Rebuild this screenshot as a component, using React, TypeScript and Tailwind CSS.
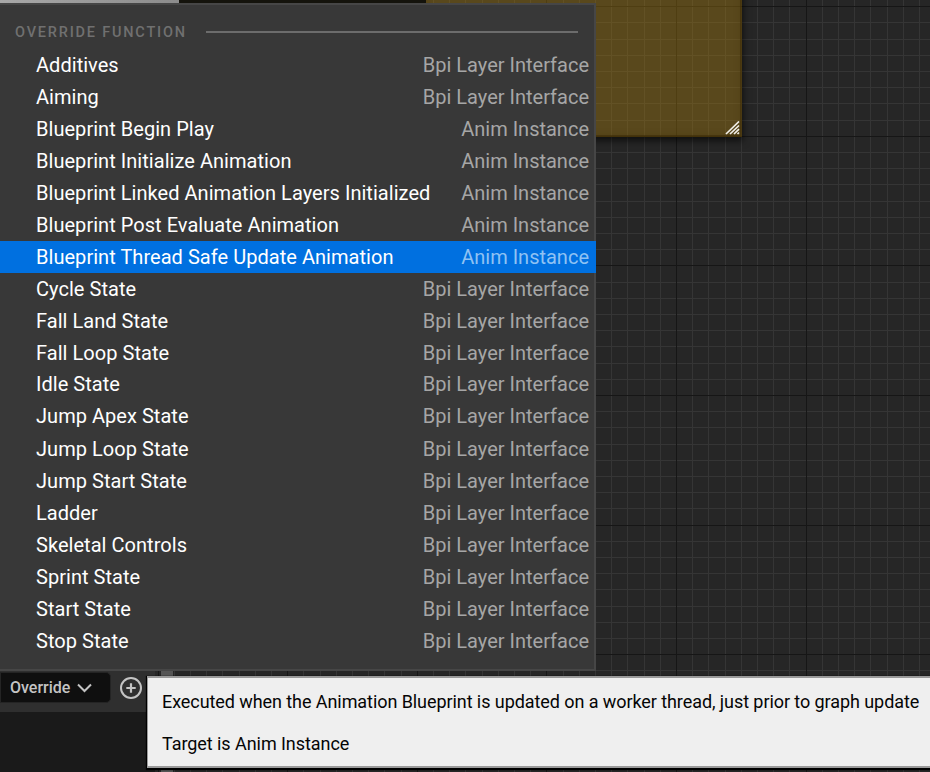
const items: [string, string][] = [
  ["Additives", "Bpi Layer Interface"],
  ["Aiming", "Bpi Layer Interface"],
  ["Blueprint Begin Play", "Anim Instance"],
  ["Blueprint Initialize Animation", "Anim Instance"],
  ["Blueprint Linked Animation Layers Initialized", "Anim Instance"],
  ["Blueprint Post Evaluate Animation", "Anim Instance"],
  ["Blueprint Thread Safe Update Animation", "Anim Instance"],
  ["Cycle State", "Bpi Layer Interface"],
  ["Fall Land State", "Bpi Layer Interface"],
  ["Fall Loop State", "Bpi Layer Interface"],
  ["Idle State", "Bpi Layer Interface"],
  ["Jump Apex State", "Bpi Layer Interface"],
  ["Jump Loop State", "Bpi Layer Interface"],
  ["Jump Start State", "Bpi Layer Interface"],
  ["Ladder", "Bpi Layer Interface"],
  ["Skeletal Controls", "Bpi Layer Interface"],
  ["Sprint State", "Bpi Layer Interface"],
  ["Start State", "Bpi Layer Interface"],
  ["Stop State", "Bpi Layer Interface"],
];

const SPACING = 16.2;

function gridLines(origin: number, from: number, to: number) {
  const lines: { at: number; major: boolean }[] = [];
  for (let k = from; k <= to; k++) {
    lines.push({ at: Math.floor(origin + k * SPACING), major: k % 8 === 0 });
  }
  return lines;
}

const columns = gridLines(806.1, -40, 7);
const rows = gridLines(265.8, -16, 31);

/** Graph canvas with its grid; the comment box sits on top of it. */
function GraphCanvas() {
  return (
    <div className="absolute inset-0 bg-[#262626]">
      <svg width="930" height="772" shapeRendering="crispEdges" className="block">
        {[false, true].map((major) => (
          <g key={String(major)} fill={major ? "#161616" : "#353535"}>
            {columns.filter((l) => l.major === major).map((l) => (
              <rect key={"c" + l.at} x={l.at} y="0" width="1" height="772" />
            ))}
            {rows.filter((l) => l.major === major).map((l) => (
              <rect key={"r" + l.at} x="160" y={l.at} width="770" height="1" />
            ))}
          </g>
        ))}
      </svg>
      <div className="absolute left-[426px] top-[-10px] h-[147px] w-[316px] border-b-2 border-r-2 border-[#3a2a05]/60 bg-[#b3840a]/36 shadow-[0_3px_7px_1px_rgba(0,0,0,0.6),inset_0_0_6px_rgba(60,42,0,0.25)]">
        <svg width="15" height="14" viewBox="0 0 15 14" className="absolute bottom-0 right-0">
          <path d="M1 13 14 0.5M5 13l9-8.5M9 13l5-4.8M12.5 13l1.5-1.5" stroke="#f2efe8" strokeWidth="1.7" fill="none" />
        </svg>
      </div>
    </div>
  );
}

function OverrideMenu() {
  return (
    <div className="absolute left-0 top-[3px] flex h-[668px] w-[596px] flex-col border-b-2 border-r-2 border-t-2 border-[#464646] bg-[#383838]">
      <div className="flex h-[44px] items-center pb-px pl-[15px] pr-4 pt-[11px]">
        <span className="w-[191px] whitespace-nowrap pt-px text-[14.5px] font-medium leading-[16px] tracking-[1.8px] text-[#707070]">
          OVERRIDE FUNCTION
        </span>
        <span className="h-0.5 flex-1 bg-[#6c6c6c]" />
      </div>
      {items.map(([name, owner], i) => (
        <div
          key={name}
          className={
            "-mr-0.5 flex h-8 shrink-0 items-center justify-between pl-9 pr-[7px] text-[20px] leading-8 whitespace-nowrap text-white " +
            (i === 6 ? "bg-[#0070e0]" : i === 10 || i === 11 ? "pb-0.5" : "")
          }
        >
          <span className="tracking-[0.04px]">{name}</span>
          <span className={i === 6 ? "text-[#8fc2f3]" : "text-[#a6a6a6]"}>{owner}</span>
        </div>
      ))}
    </div>
  );
}

function Toolbar() {
  return (
    <div className="absolute left-0 top-[671px] h-[101px] w-[155px] bg-[#1a1a1a]">
      <div className="flex h-[41px] items-start bg-[#2f2f2f] pt-px">
        <div className="flex h-[31px] w-[111px] items-center rounded-r-[5px] border border-[#242424] bg-[#0f0f0f] pl-[9px]">
          <span className="text-[16px] font-medium leading-none text-[#c4c4c4]">Override</span>
          <svg width="15" height="10" viewBox="0 0 15 10" className="ml-[7px]">
            <path d="m1 1.5 6.5 6.5L14 1.5" stroke="#c4c4c4" strokeWidth="2" fill="none" />
          </svg>
        </div>
        <svg width="24" height="24" viewBox="0 0 24 24" className="ml-2 mt-[4px]">
          <circle cx="12" cy="12" r="10" stroke="#c4c4c4" strokeWidth="2" fill="none" />
          <path d="M12 7.3v9.4M7.3 12h9.4" stroke="#c4c4c4" strokeWidth="2.2" />
        </svg>
      </div>
    </div>
  );
}

function Tooltip() {
  return (
    <div className="absolute left-[147px] top-[676px] h-[92px] w-[800px] border-2 border-l border-[#9a9a9a] bg-[#efefef] pl-[14px] pt-[13px] text-[18px] leading-[21px] text-[#050505] whitespace-nowrap shadow-[0_1px_1px_1px_#000]">
      <div className="tracking-[-0.073px]">Executed when the Animation Blueprint is updated on a worker thread, just prior to graph update</div>
      <div className="mt-[21px] tracking-[-0.06px]">Target is Anim Instance</div>
    </div>
  );
}

export default function App() {
  return (
    <div className="relative h-[772px] w-[930px] overflow-hidden bg-[#262626] font-['Roboto','Liberation_Sans',sans-serif]">
      <GraphCanvas />
      <div className="absolute left-0 top-0 flex h-[3px] w-[426px] bg-[#14130c]">
        <div className="w-[179px] bg-gradient-to-r from-[#a8a8a8] to-[#8c8c8c]" />
      </div>
      <Toolbar />
      <div className="absolute left-[161px] top-[671px] h-[101px] w-3 bg-[#555]" />
      <OverrideMenu />
      <Tooltip />
    </div>
  );
}
